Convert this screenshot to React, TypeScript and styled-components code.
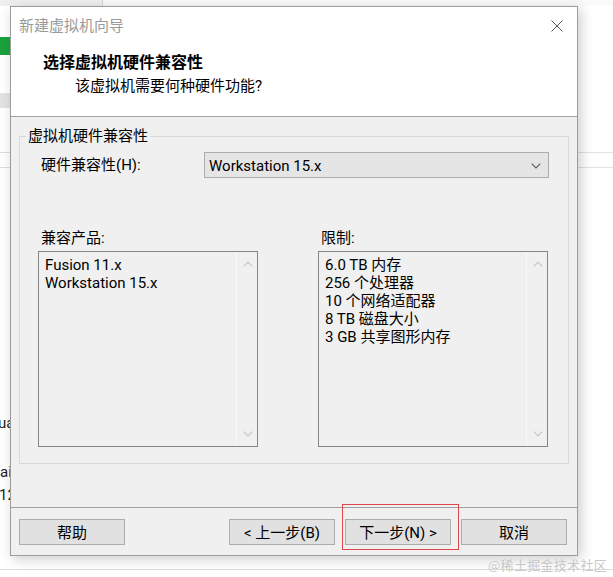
import React from "react";
import styled, { createGlobalStyle } from "styled-components";

const UI = `Roboto, "Noto Sans CJK SC", sans-serif`;

const GlobalStyle = createGlobalStyle`
  html, body { margin: 0; padding: 0; background: #ffffff; }
  body { font-family: ${UI}; overflow: hidden; }
  * { box-sizing: border-box; }
`;

const Page = styled.div`
  position: relative;
  width: 613px;
  height: 577px;
  overflow: hidden;
  background: #ffffff;
`;

/* ---------- background window (behind the dialog) ---------- */
const Backdrop = styled.div`
  display: flex;
  flex-direction: column;
  height: 100%;
`;

const TopStrip = styled.div`
  height: 6px;
  display: flex;
  overflow: hidden;
  background: #fafafa;
`;

const TopCell = styled.div`
  width: 103px;
  background: #efefef;
  border-right: 1px solid #d6d6d6;
`;

const TopText = styled.div`
  padding-left: 44px;
  margin-top: -12px;
  font-size: 15px;
  line-height: 15px;
  color: #222;
  white-space: nowrap;
`;

const Middle = styled.div`
  height: 563px;
  display: flex;
`;

const SidePane = styled.div<{ $w: number }>`
  width: ${(p) => p.$w}px;
  display: flex;
  flex-direction: column;
  overflow: hidden;
`;

const Spacer = styled.div`
  flex: 1;
`;

const Band = styled.div<{ $top: number; $h: number; $c: string }>`
  margin-top: ${(p) => p.$top}px;
  height: ${(p) => p.$h}px;
  background: ${(p) => p.$c};
  flex-shrink: 0;
`;

const BackText = styled.div<{ $top: number; $shift: number }>`
  margin-top: ${(p) => p.$top}px;
  margin-left: ${(p) => p.$shift}px;
  font-size: 15px;
  line-height: 18px;
  color: #222;
  white-space: nowrap;
  flex-shrink: 0;
`;

const BottomRule = styled.div`
  height: 1px;
  background: #dcdcdc;
`;

/* ---------- dialog ---------- */
const Dialog = styled.div`
  position: absolute;
  left: 10px;
  top: 6px;
  width: 568px;
  height: 550px;
  border: 1px solid #9c9c9c;
  background: #f0f0f0;
  display: flex;
  flex-direction: column;
  box-shadow: 3px 3px 12px rgba(0, 0, 0, 0.2);
  font-family: ${UI};
  font-size: 15px;
  color: #000;
`;

const Header = styled.div`
  height: 110px;
  flex-shrink: 0;
  background: #ffffff;
  border-bottom: 1px solid #a0a0a0;
`;

const TitleBar = styled.div`
  height: 36px;
  display: flex;
  align-items: center;
  justify-content: space-between;
  padding: 1px 14px 0 8px;
`;

const Title = styled.div`
  color: #9a9a9a;
  font-size: 15px;
  line-height: 20px;
`;

const Heading = styled.div`
  margin-top: 8px;
  padding-left: 32px;
  font-size: 16px;
  font-weight: 700;
  line-height: 24px;
`;

const Subtitle = styled.div`
  padding-left: 64px;
  font-size: 15px;
  line-height: 22px;
`;

const Body = styled.div`
  flex: 1;
  padding: 9px 8px 0 8px;
`;

const Group = styled.fieldset`
  margin: 0;
  padding: 0;
  border: 1px solid #d9d9d9;
  min-width: 0;
`;

const GroupLegend = styled.legend`
  margin-left: 6px;
  padding: 0 2px;
  font-size: 15px;
  line-height: 20px;
`;

const GroupContent = styled.div`
  padding: 6px 19px 16px 18px;
`;

const CompatRow = styled.div`
  display: grid;
  grid-template-columns: 164px 1fr;
  align-items: center;
  padding-left: 2px;
`;

const FieldLabel = styled.div`
  line-height: 20px;
  padding-left: 1px;
`;

const Combo = styled.div`
  height: 26px;
  border: 1px solid #adadad;
  background: #e5e5e5;
  display: flex;
  align-items: center;
  justify-content: space-between;
  padding: 1px 7px 0 4px;
  line-height: 20px;
`;

const ListsGrid = styled.div`
  margin-top: 50px;
  margin-right: 1px;
  display: grid;
  grid-template-columns: 220px 230px;
  justify-content: space-between;
  row-gap: 3px;
`;

const ListLabel = styled.div`
  line-height: 20px;
  padding-left: 3px;
`;

const ListBox = styled.div`
  height: 196px;
  border: 1px solid #858585;
  background: #f0f0f0;
  display: flex;
`;

const ListItems = styled.div`
  flex: 1;
  padding: 4px 6px 3px;
  line-height: 18px;
  white-space: nowrap;
`;

const ScrollTrack = styled.div`
  width: 21px;
  border-left: 1px solid #f9f9f9;
  display: flex;
  flex-direction: column;
  align-items: center;
  justify-content: space-between;
  padding: 9px 0 9px 1px;
`;

const Footer = styled.div`
  height: 48px;
  flex-shrink: 0;
  border-top: 1px solid #a0a0a0;
  display: flex;
  justify-content: space-between;
  align-items: flex-start;
  padding: 11px 10px 0 8px;
`;

const ButtonGroup = styled.div`
  display: flex;
  gap: 10px;
`;

const Button = styled.div<{ $highlight?: boolean }>`
  position: relative;
  width: 106px;
  height: 26px;
  border: 1px solid #adadad;
  background: #e1e1e1;
  display: flex;
  align-items: center;
  justify-content: center;
  padding-top: 2px;
  font-size: 15px;
  line-height: 20px;
  white-space: pre;
  ${(p) =>
    p.$highlight &&
    `
    &::after {
      content: "";
      position: absolute;
      left: -4px;
      top: -16px;
      right: -9px;
      bottom: -6px;
      border: 1px solid #e0474c;
    }
  `}
`;

const Watermark = styled.div`
  position: absolute;
  right: 6px;
  bottom: 3px;
  font-family: "Noto Sans CJK SC", sans-serif;
  font-size: 13px;
  line-height: 18px;
  color: #c8c8c8;
  letter-spacing: 0.3px;
`;

/* ---------- icons ---------- */
const CloseIcon = () => (
  <svg width="12" height="12" viewBox="0 0 12 12">
    <path d="M0.5 0.5 L11.5 11.5 M11.5 0.5 L0.5 11.5" stroke="#5c5c5c" strokeWidth="1" fill="none" />
  </svg>
);

const Chevron = ({ up, color }: { up?: boolean; color: string }) => (
  <svg width="10" height="6" viewBox="0 0 10 6">
    <polyline
      points={up ? "0.7,5.3 5,1 9.3,5.3" : "0.7,0.7 5,5 9.3,0.7"}
      stroke={color}
      strokeWidth="1.1"
      fill="none"
    />
  </svg>
);

const Scroller = () => (
  <ScrollTrack>
    <Chevron up color="#c6c6c6" />
    <Chevron color="#c6c6c6" />
  </ScrollTrack>
);

const products = ["Fusion 11.x", "Workstation 15.x"];
const limits = ["6.0 TB 内存", "256 个处理器", "10 个网络适配器", "8 TB 磁盘大小", "3 GB 共享图形内存"];

export default function App() {
  return (
    <Page>
      <GlobalStyle />
      <Backdrop>
        <TopStrip>
          <TopCell />
          <TopText>90 x 2.90 GHz</TopText>
        </TopStrip>
        <Middle>
          <SidePane $w={10}>
            <Band $top={31} $h={18} $c="#1aa33c" />
            <Band $top={38} $h={15} $c="#e3e3e3" />
            <Band $top={44} $h={1} $c="#dedede" />
            <Band $top={14} $h={1} $c="#dedede" />
            <BackText $top={246} $shift={-2}>ua</BackText>
            <BackText $top={31} $shift={0}>ai</BackText>
            <BackText $top={5} $shift={-1}>12</BackText>
          </SidePane>
          <Spacer />
          <SidePane $w={35}>
            <Band $top={146} $h={1} $c="#e2e2e2" />
            <Band $top={14} $h={1} $c="#e2e2e2" />
          </SidePane>
        </Middle>
        <BottomRule />
      </Backdrop>

      <Dialog>
        <Header>
          <TitleBar>
            <Title>新建虚拟机向导</Title>
            <CloseIcon />
          </TitleBar>
          <Heading>选择虚拟机硬件兼容性</Heading>
          <Subtitle>该虚拟机需要何种硬件功能?</Subtitle>
        </Header>

        <Body>
          <Group>
            <GroupLegend>虚拟机硬件兼容性</GroupLegend>
            <GroupContent>
              <CompatRow>
                <FieldLabel>硬件兼容性(H):</FieldLabel>
                <Combo>
                  <span>Workstation 15.x</span>
                  <Chevron color="#5a5a5a" />
                </Combo>
              </CompatRow>
              <ListsGrid>
                <ListLabel>兼容产品:</ListLabel>
                <ListLabel>限制:</ListLabel>
                <ListBox>
                  <ListItems>
                    {products.map((p) => (
                      <div key={p}>{p}</div>
                    ))}
                  </ListItems>
                  <Scroller />
                </ListBox>
                <ListBox>
                  <ListItems>
                    {limits.map((l) => (
                      <div key={l}>{l}</div>
                    ))}
                  </ListItems>
                  <Scroller />
                </ListBox>
              </ListsGrid>
            </GroupContent>
          </Group>
        </Body>

        <Footer>
          <Button>帮助</Button>
          <ButtonGroup>
            <Button>{"< 上一步(B)"}</Button>
            <Button $highlight>{"下一步(N) >"}</Button>
            <Button>取消</Button>
          </ButtonGroup>
        </Footer>
      </Dialog>

      <Watermark>@稀土掘金技术社区</Watermark>
    </Page>
  );
}
